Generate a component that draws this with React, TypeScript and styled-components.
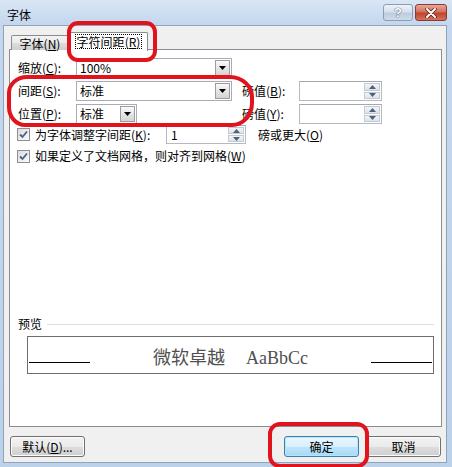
import React from 'react';
import styled, { createGlobalStyle } from 'styled-components';

const RED = '#e1141d';

const GlobalStyle = createGlobalStyle`
  html, body {
    margin: 0;
    padding: 0;
    background: #ffffff;
  }
  body {
    font-family: "Noto Sans CJK SC", "Liberation Sans", sans-serif;
    font-size: 12px;
    color: #000;
  }
`;

const Window = styled.div`
  position: relative;
  width: 452px;
  height: 467px;
  overflow: hidden;
  display: flex;
  flex-direction: column;
  box-sizing: border-box;
  background: linear-gradient(#d9e6f5, #c4d7ee 24px, #bcd1ea);
`;

const TitleBar = styled.div`
  height: 25px;
  flex: none;
  display: flex;
  align-items: flex-start;
  justify-content: space-between;
  padding: 0 5px 0 7px;
`;

const Title = styled.span`
  margin-top: 9px;
  line-height: 12px;
`;

const CaptionButtons = styled.div`
  display: flex;
  gap: 2px;
  margin-top: 4px;
`;

const CaptionButton = styled.div<{ $close?: boolean }>`
  width: ${(p) => (p.$close ? 32 : 30)}px;
  height: 17px;
  box-sizing: border-box;
  border-radius: 3px;
  display: flex;
  align-items: center;
  justify-content: center;
  border: 1px solid ${(p) => (p.$close ? '#8c3a2c' : '#8a9db5')};
  background: ${(p) =>
    p.$close
      ? 'linear-gradient(#e8a999, #d27260 45%, #c0442c 55%, #d1735d)'
      : 'linear-gradient(#eef3f9, #d5e1ee 45%, #bccde1 55%, #cddbeb)'};
  color: #fff;
  font: bold 13px "Liberation Sans", sans-serif;
  text-shadow: 0 0 1px #3a4c66, 0 0 1px #3a4c66;
`;

const Client = styled.div`
  flex: 1;
  display: flex;
  flex-direction: column;
  margin: 0 5px 4px 3px;
  padding: 6px 4px 0 5px;
  background: #f0f0f0;
  border: 1px solid #8fa3bb;
`;

const TabStrip = styled.div`
  display: flex;
  align-items: flex-end;
  height: 18px;
  padding-left: 2px;
  position: relative;
  z-index: 1;
  margin-bottom: -1px;
`;

const Tab = styled.div<{ $active?: boolean }>`
  box-sizing: border-box;
  height: ${(p) => (p.$active ? 19 : 15)}px;
  width: ${(p) => (p.$active ? 79 : 58)}px;
  margin-left: ${(p) => (p.$active ? 0 : 0)}px;
  display: flex;
  align-items: center;
  justify-content: center;
  border: 1px solid #898c95;
  border-bottom: none;
  border-radius: 2px 2px 0 0;
  background: ${(p) => (p.$active ? '#fff' : 'linear-gradient(#f3f3f3, #ebebeb 50%, #dddddd 51%, #cfcfcf)')};
  ${(p) => (p.$active ? 'margin-bottom: -1px; padding-bottom: 1px;' : '')}
`;

const FocusRect = styled.span`
  border: 1px dotted #000;
  padding: 0 1px;
  line-height: 13px;
`;

const Panel = styled.div`
  flex: 1;
  display: flex;
  flex-direction: column;
  background: #fff;
  border: 1px solid #898c95;
  padding: 8px 7px 0 8px;
`;

const FieldGrid = styled.div`
  display: grid;
  grid-template-columns: 58px 156px 67px 83px;
  grid-auto-rows: 20px;
  row-gap: 3px;
  align-items: center;
`;

const Label = styled.span<{ $indent?: number; $width?: number }>`
  padding-left: ${(p) => p.$indent || 0}px;
  ${(p) => (p.$width ? `width: ${p.$width}px; flex: none;` : '')}
  white-space: nowrap;
  line-height: 14px;
`;

const Combo = styled.div<{ $w?: number }>`
  box-sizing: border-box;
  width: ${(p) => (p.$w ? `${p.$w}px` : '100%')};
  height: 100%;
  border: 1px solid #a8adb5;
  background: #fff;
  display: flex;
  align-items: center;
  padding: 1px 1px 1px 3px;
`;

const ComboText = styled.span`
  flex: 1;
  line-height: 14px;
`;

const DropButton = styled.span`
  width: 15px;
  height: 100%;
  box-sizing: border-box;
  border: 1px solid #9d9d9d;
  background: linear-gradient(#fafafa, #e6e6e6 50%, #d4d4d4);
  display: flex;
  align-items: center;
  justify-content: center;
`;

const Spinner = styled.div<{ $w?: number }>`
  box-sizing: border-box;
  width: ${(p) => (p.$w ? `${p.$w}px` : '100%')};
  height: 100%;
  border: 1px solid #b5b9c1;
  border-top-color: #a3a7ae;
  background: #fff;
  display: flex;
  align-items: center;
  padding: 1px;
`;

const SpinValue = styled.span`
  flex: 1;
  padding-left: 3px;
  line-height: 14px;
`;

const SpinButtons = styled.div`
  width: 16px;
  height: 100%;
  display: flex;
  flex-direction: column;
  gap: 1px;
`;

const SpinButton = styled.span`
  flex: 1;
  box-sizing: border-box;
  border: 1px solid #c3cad3;
  background: linear-gradient(#f3f5f8, #dde3ea);
  display: flex;
  align-items: center;
  justify-content: center;
`;

const CheckRow = styled.div<{ $top: number; $h: number }>`
  display: flex;
  align-items: center;
  height: ${(p) => p.$h}px;
  margin-top: ${(p) => p.$top}px;
  margin-left: -1px;
`;

const CheckBox = styled.span`
  width: 13px;
  height: 13px;
  flex: none;
  box-sizing: border-box;
  border: 1px solid #8f8f8f;
  background: linear-gradient(135deg, #dcdcdc, #fbfbfb);
  display: flex;
  align-items: center;
  justify-content: center;
  margin-right: 5px;
`;

const PreviewHeading = styled.div`
  display: flex;
  align-items: center;
  height: 14px;
  margin-top: 154px;
`;

const Rule = styled.span`
  flex: 1;
  height: 1px;
  margin-left: 5px;
  background: #d5dfe5;
`;

const PreviewBox = styled.div`
  box-sizing: border-box;
  height: 38px;
  margin: 5px 0 0 9px;
  border: 1px solid #6e6e6e;
  display: flex;
  align-items: center;
  padding: 0 1px;
`;

const PreviewLine = styled.span`
  width: 61px;
  height: 1px;
  background: #000;
  align-self: flex-end;
  margin-bottom: 10px;
`;

const PreviewText = styled.span`
  flex: 1;
  text-align: center;
  font-family: "Liberation Serif", "Noto Sans CJK SC", serif;
  font-size: 18px;
  color: #505050;
  padding-top: 1px;
`;

const Latin = styled.span`
  margin-left: 21px;
`;

const Footer = styled.div`
  display: flex;
  justify-content: space-between;
  height: 35px;
  padding: 9px 1px 0 1px;
  box-sizing: border-box;
`;

const ButtonGroup = styled.div`
  display: flex;
  gap: 7px;
`;

const Button = styled.div<{ $default?: boolean }>`
  width: 75px;
  height: 21px;
  box-sizing: border-box;
  border-radius: 3px;
  border: 1px solid ${(p) => (p.$default ? '#3c7fb1' : '#707070')};
  background: ${(p) =>
    p.$default
      ? 'linear-gradient(#eaf6fd, #d9f0fc 50%, #bee6fd 51%, #a7d9f5)'
      : 'linear-gradient(#f2f2f2, #ebebeb 50%, #dddddd 51%, #cfcfcf)'};
  ${(p) => (p.$default ? 'box-shadow: inset 0 0 0 1px #b6e4fa;' : 'box-shadow: inset 0 0 0 1px #fbfbfb;')}
  display: flex;
  align-items: center;
  justify-content: center;
  line-height: 14px;
`;

const Annotation = styled.div<{ $x: number; $y: number; $w: number; $h: number; $r: string }>`
  position: absolute;
  left: ${(p) => p.$x}px;
  top: ${(p) => p.$y}px;
  width: ${(p) => p.$w}px;
  height: ${(p) => p.$h}px;
  box-sizing: border-box;
  border: 4px solid ${RED};
  border-radius: ${(p) => p.$r};
  pointer-events: none;
  z-index: 5;
`;

const Acc = ({ k }: { k: string }) => (
  <>
    (<u>{k}</u>)
  </>
);

const DownArrow = ({ color = '#000' }: { color?: string }) => (
  <svg width="7" height="4" viewBox="0 0 7 4">
    <polygon points="0,0 7,0 3.5,4" fill={color} />
  </svg>
);

const UpArrow = ({ color = '#4c607f' }: { color?: string }) => (
  <svg width="7" height="4" viewBox="0 0 7 4">
    <polygon points="0,4 7,4 3.5,0" fill={color} />
  </svg>
);

const Check = () => (
  <svg width="9" height="9" viewBox="0 0 9 9">
    <path d="M1 4.5 L3.5 7 L8 1.5" stroke="#4a5f8c" strokeWidth="1.8" fill="none" />
  </svg>
);

const CloseGlyph = () => (
  <svg width="12" height="10" viewBox="0 0 12 10">
    <path d="M2 1 L10 9 M10 1 L2 9" stroke="#5a1b12" strokeWidth="3.4" strokeLinecap="round" />
    <path d="M2 1 L10 9 M10 1 L2 9" stroke="#fff" strokeWidth="2" strokeLinecap="round" />
  </svg>
);

const ComboBox = ({ text, w }: { text: string; w?: number }) => (
  <Combo $w={w}>
    <ComboText>{text}</ComboText>
    <DropButton>
      <DownArrow />
    </DropButton>
  </Combo>
);

const SpinBox = ({ value = '', w }: { value?: string; w?: number }) => (
  <Spinner $w={w}>
    <SpinValue>{value}</SpinValue>
    <SpinButtons>
      <SpinButton>
        <UpArrow />
      </SpinButton>
      <SpinButton>
        <DownArrow color="#4c607f" />
      </SpinButton>
    </SpinButtons>
  </Spinner>
);

export default function App() {
  return (
    <>
      <GlobalStyle />
      <Window>
        <TitleBar>
          <Title>字体</Title>
          <CaptionButtons>
            <CaptionButton>?</CaptionButton>
            <CaptionButton $close>
              <CloseGlyph />
            </CaptionButton>
          </CaptionButtons>
        </TitleBar>
        <Client>
          <TabStrip>
            <Tab>
              字体<Acc k="N" />
            </Tab>
            <Tab $active>
              <FocusRect>
                字符间距<Acc k="R" />
              </FocusRect>
            </Tab>
          </TabStrip>
          <Panel>
            <FieldGrid>
              <Label>
                缩放<Acc k="C" />:
              </Label>
              <ComboBox text="100%" />
              <span />
              <span />

              <Label>
                间距<Acc k="S" />:
              </Label>
              <ComboBox text="标准" />
              <Label $indent={10}>
                磅值<Acc k="B" />:
              </Label>
              <SpinBox />

              <Label>
                位置<Acc k="P" />:
              </Label>
              <ComboBox text="标准" w={61} />
              <Label $indent={10}>
                磅值<Acc k="Y" />:
              </Label>
              <SpinBox />
            </FieldGrid>

            <CheckRow $top={1} $h={19}>
              <CheckBox>
                <Check />
              </CheckBox>
              <Label $width={131}>
                为字体调整字间距<Acc k="K" />:
              </Label>
              <SpinBox value="1" w={80} />
              <Label $indent={12}>
                磅或更大<Acc k="O" />
              </Label>
            </CheckRow>
            <CheckRow $top={5} $h={14}>
              <CheckBox>
                <Check />
              </CheckBox>
              <Label>
                如果定义了文档网格，则对齐到网格<Acc k="W" />
              </Label>
            </CheckRow>

            <PreviewHeading>
              <Label>预览</Label>
              <Rule />
            </PreviewHeading>
            <PreviewBox>
              <PreviewLine />
              <PreviewText>
                微软卓越<Latin>AaBbCc</Latin>
              </PreviewText>
              <PreviewLine />
            </PreviewBox>
          </Panel>
          <Footer>
            <Button>
              默认<Acc k="D" />...
            </Button>
            <ButtonGroup>
              <Button $default>确定</Button>
              <Button>取消</Button>
            </ButtonGroup>
          </Footer>
        </Client>
        <Annotation $x={67} $y={21} $w={90} $h={41} $r="11px" />
        <Annotation $x={7} $y={75} $w={247} $h={52} $r="20px 24px 22px 18px / 18px 22px 24px 20px" />
        <Annotation $x={268} $y={422} $w={101} $h={46} $r="12px" />
      </Window>
    </>
  );
}
